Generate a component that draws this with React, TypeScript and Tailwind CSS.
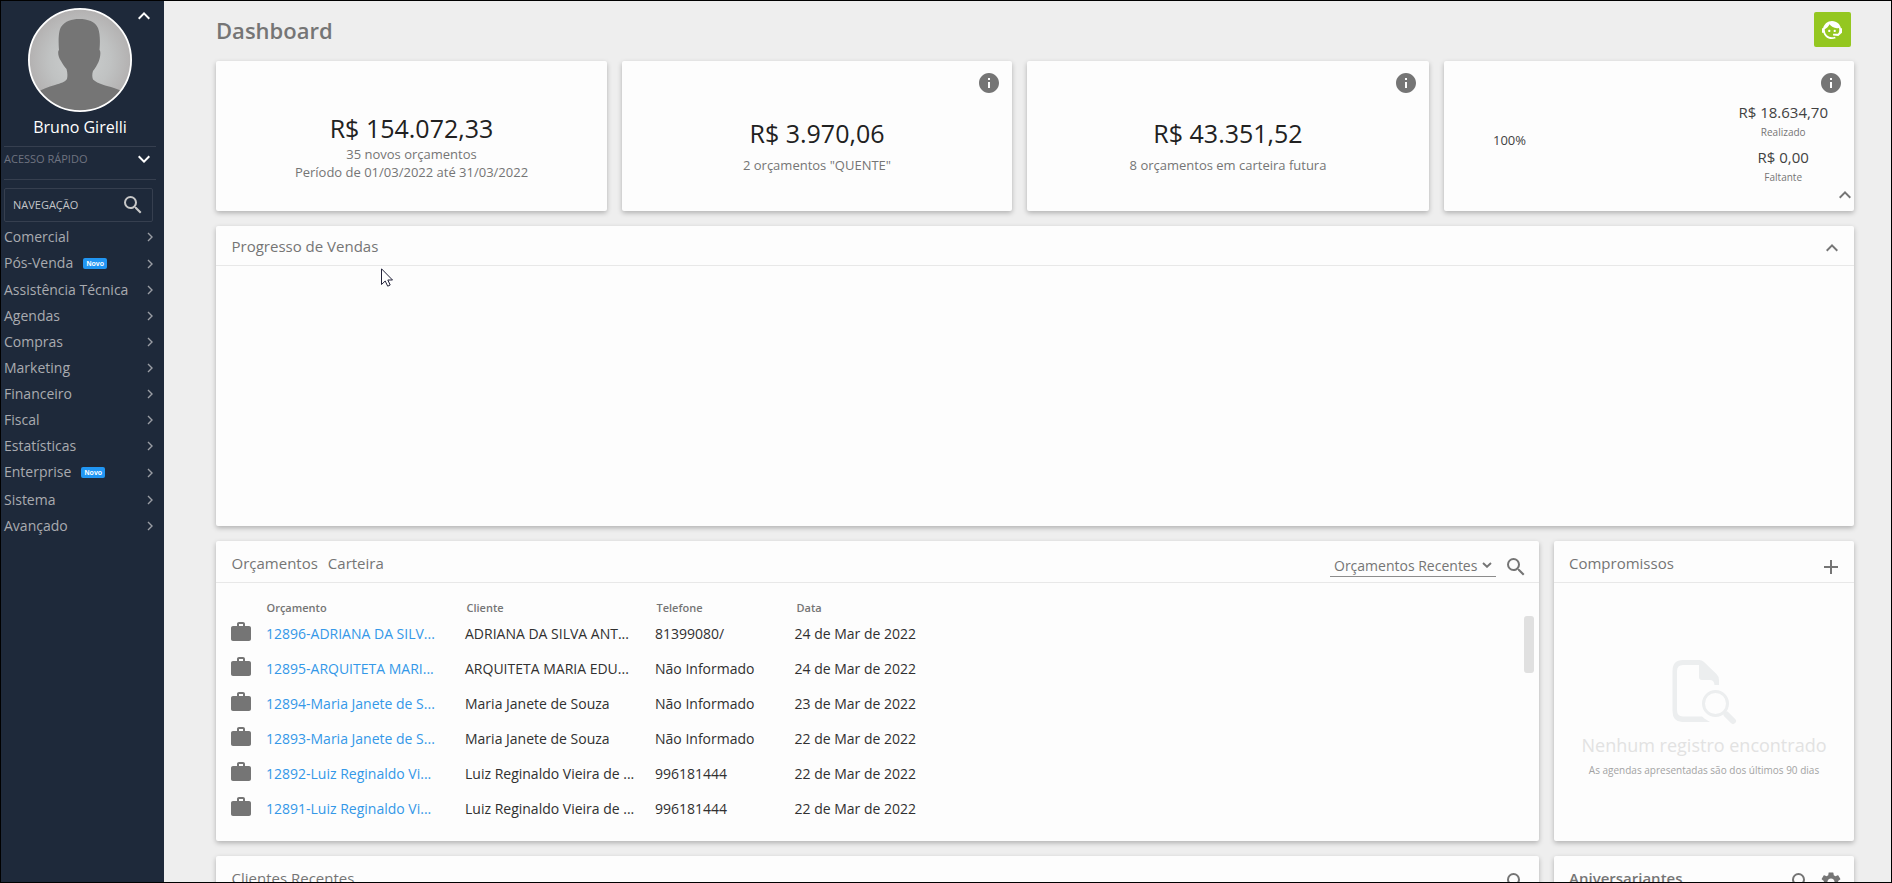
import type { ReactNode } from 'react';
import { MdAdd, MdExpandLess, MdExpandMore, MdInfo, MdSearch, MdSettings, MdWork } from 'react-icons/md';

interface NavItem {
  label: string;
  height: string;
  isNew?: boolean;
}

interface Quote {
  title: string;
  client: string;
  phone: string;
  date: string;
}

const navItems: NavItem[] = [
  { label: 'Comercial', height: 'h-[26px]' },
  { label: 'Pós-Venda', height: 'h-[27px]', isNew: true },
  { label: 'Assistência Técnica', height: 'h-[26px]' },
  { label: 'Agendas', height: 'h-[26px]' },
  { label: 'Compras', height: 'h-[26px]' },
  { label: 'Marketing', height: 'h-[26px]' },
  { label: 'Financeiro', height: 'h-[26px]' },
  { label: 'Fiscal', height: 'h-[26px]' },
  { label: 'Estatísticas', height: 'h-[26px]' },
  { label: 'Enterprise', height: 'h-[28px]', isNew: true },
  { label: 'Sistema', height: 'h-[26px]' },
  { label: 'Avançado', height: 'h-[26px]' },
];

const quotes: Quote[] = [
  { title: '12896-ADRIANA DA SILV...', client: 'ADRIANA DA SILVA ANT...', phone: '81399080/', date: '24 de Mar de 2022' },
  { title: '12895-ARQUITETA MARI...', client: 'ARQUITETA MARIA EDU...', phone: 'Não Informado', date: '24 de Mar de 2022' },
  { title: '12894-Maria Janete de S...', client: 'Maria Janete de Souza', phone: 'Não Informado', date: '23 de Mar de 2022' },
  { title: '12893-Maria Janete de S...', client: 'Maria Janete de Souza', phone: 'Não Informado', date: '22 de Mar de 2022' },
  { title: '12892-Luiz Reginaldo Vi...', client: 'Luiz Reginaldo Vieira de ...', phone: '996181444', date: '22 de Mar de 2022' },
  { title: '12891-Luiz Reginaldo Vi...', client: 'Luiz Reginaldo Vieira de ...', phone: '996181444', date: '22 de Mar de 2022' },
];

function Card({ className, children }: { className: string; children?: ReactNode }) {
  return (
    <div
      className={`relative shrink-0 rounded-[2px] bg-[#fdfdfd] shadow-[0_2px_5px_0_rgba(0,0,0,0.26)] ${className}`}
    >
      {children}
    </div>
  );
}

function CardHeader({ className = 'h-[42px] pl-[15.5px]', children }: { className?: string; children: ReactNode }) {
  return (
    <div className={`flex justify-between border-b border-[#e8e8e8] text-[15px] text-[#757575] ${className}`}>
      {children}
    </div>
  );
}

function Avatar() {
  return (
    <svg viewBox="0 0 104 104" className="h-[104px] w-[104px]">
      <defs>
        <radialGradient id="avatarBg">
          <stop offset="0" stopColor="#cdd0d0" />
          <stop offset="0.6" stopColor="#c0c2c2" />
          <stop offset="1" stopColor="#b3b1b1" />
        </radialGradient>
        <clipPath id="avatarClip">
          <circle cx="52" cy="52" r="51" />
        </clipPath>
      </defs>
      <circle cx="52" cy="52" r="51" fill="url(#avatarBg)" />
      <path
        clipPath="url(#avatarClip)"
        fill="#757575"
        d="M31 42C30.500 36 30 24 33 19C37 13 44 11 51 11C60 11 67 13.500 70 20C72.500 26 72 36 71.500 42C73 43 72.500 49 70.500 54C69 57 67.500 60 65 63C64 66 64 69 65 71.500C70 76 78 77.500 86 80C90 81.300 92 82 94 84L94 104L10 104L10 84C14 81 20 79 27 77C33 75 37 74 39 71C39.700 68 39.500 64 38.500 61C36 58 34.500 56 33 53C30 49 29.500 43 31 42Z"
      />
      <circle cx="52" cy="52" r="51.100" fill="none" stroke="#fff" strokeWidth="1.800" />
    </svg>
  );
}

function AgentIcon() {
  return (
    <svg viewBox="0 0 24 24" className="-ml-[2px] h-6 w-6 shrink-0" fill="#fff">
      <path d="M18.720 14.760C19.070 13.910 19.260 13 19.260 12C19.260 11.280 19.150 10.590 18.960 9.950C18.310 10.100 17.630 10.180 16.920 10.180C13.860 10.180 11.150 8.670 9.500 6.340C8.610 8.500 6.910 10.260 4.770 11.220C4.730 11.470 4.730 11.740 4.730 12A7.270 7.270 0 0 0 12 19.270C13.050 19.270 14.060 19.040 14.970 18.630C15.540 19.720 15.800 20.260 15.780 20.260C14.140 20.810 12.870 21.080 12 21.080C9.580 21.080 7.270 20.130 5.570 18.420C4.530 17.380 3.760 16.110 3.330 14.730H2V10.180H3.090C3.930 6.040 7.600 2.920 12 2.920C14.400 2.920 16.710 3.870 18.420 5.570C19.690 6.840 20.540 8.450 20.890 10.180H22V14.670L22 14.690V14.730H21.940L18.380 18L13.080 17.400V15.730H17.910L18.720 14.760M9.270 11.770C9.570 11.770 9.860 11.890 10.070 12.110C10.280 12.320 10.400 12.610 10.400 12.910C10.400 13.210 10.280 13.500 10.070 13.710C9.860 13.920 9.570 14.040 9.270 14.040C8.640 14.040 8.130 13.540 8.130 12.910C8.130 12.280 8.640 11.770 9.270 11.770M14.720 11.770C15.350 11.770 15.850 12.280 15.850 12.910C15.850 13.540 15.350 14.040 14.720 14.040C14.090 14.040 13.580 13.540 13.580 12.910A1.140 1.140 0 0 1 14.720 11.770Z" />
    </svg>
  );
}

function EmptyIcon() {
  return (
    <svg viewBox="0 0 66 66" className="-ml-[1px] h-[66px] w-[66px]" fill="none">
      <path
        d="M12 0H29V5H12Q6 5 6 11V50Q6 56.500 12 56.500H31Q34 59.500 39 62H11Q1.500 61.500 1.500 51V11Q1.500 0 12 0Z"
        fill="#eceeef"
      />
      <path d="M28 0Q31 0 33 2L45.500 14Q48 16.500 48 20V25H43.500Q43 20 39 20H31Q28 20 28 17Z" fill="#eceeef" />
      <circle cx="44.500" cy="43.500" r="12" stroke="#eceeef" strokeWidth="3" />
      <path d="M55.500 54.500L62 61" stroke="#eceeef" strokeWidth="6" strokeLinecap="round" />
    </svg>
  );
}

function Sidebar() {
  return (
    <aside className="flex w-[163px] shrink-0 flex-col bg-[#1e293a] pl-[3px] text-[#a9abb0]">
      <div className="relative flex h-[146px] w-[152px] flex-col items-center border-b border-[#363f4f] pt-[7px]">
        <Avatar />
        <div className="mt-[4px] text-[16px] leading-[22px] text-white">Bruno Girelli</div>
        <MdExpandLess className="absolute top-[3px] right-0 h-6 w-6 text-white" />
      </div>
      <div className="flex h-[33px] w-[152px] justify-between border-b border-[#363f4f]">
        <span className="pt-[4px] text-[11px] leading-[16px] text-[#6f7380]">ACESSO RÁPIDO</span>
        <MdExpandMore className="h-6 w-6 text-white" />
      </div>
      <div className="mt-[8px] flex h-[34px] w-[149px] items-center justify-between rounded-[2px] border border-[#363f4f] pr-[7px] pl-[8px]">
        <span className="text-[11px] text-[#c4c5c8]">NAVEGAÇÃO</span>
        <MdSearch className="h-6 w-6 text-[#c8c8c8]" />
      </div>
      <nav className="mt-[2px]">
        {navItems.map((item) => (
          <div key={item.label} className={`flex pr-[11px] text-[14px] leading-[26px] ${item.height}`}>
            <span>{item.label}</span>
            {item.isNew && (
              <span className="mt-[8px] ml-[10px] flex h-[11px] w-[24px] items-center justify-center rounded-[2px] bg-[#2196f3] font-['Liberation_Sans'] text-[7px] font-bold text-white">
                Novo
              </span>
            )}
            <svg
              viewBox="0 0 6 10"
              className={`ml-auto h-[10px] w-[6px] ${item.isNew ? 'mt-[9px]' : 'mt-[8px]'}`}
              fill="none"
            >
              <path d="M1 1L5 5L1 9" stroke="#9a9da4" strokeWidth="1.400" />
            </svg>
          </div>
        ))}
      </nav>
    </aside>
  );
}

function SummaryCards() {
  return (
    <div className="flex gap-[15px]">
      <Card className="flex h-[150px] w-[391px] flex-col items-center pt-[50px]">
        <div className="text-[25px] leading-[34px] text-[#212121]">R$ 154.072,33</div>
        <div className="text-[13px] leading-[18px] text-[#757575]">35 novos orçamentos</div>
        <div className="text-[13px] leading-[18px] text-[#757575]">Período de 01/03/2022 até 31/03/2022</div>
      </Card>
      <Card className="flex h-[150px] w-[390px] flex-col items-center pt-[55px]">
        <div className="text-[25px] leading-[34px] text-[#212121]">R$ 3.970,06</div>
        <div className="mt-[6px] text-[13px] leading-[18px] text-[#757575]">2 orçamentos "QUENTE"</div>
        <MdInfo className="absolute top-[10px] right-[11px] h-6 w-6 text-[#757575]" />
      </Card>
      <Card className="flex h-[150px] w-[402px] flex-col items-center pt-[55px]">
        <div className="text-[25px] leading-[34px] text-[#212121]">R$ 43.351,52</div>
        <div className="mt-[6px] text-[13px] leading-[18px] text-[#757575]">8 orçamentos em carteira futura</div>
        <MdInfo className="absolute top-[10px] right-[11px] h-6 w-6 text-[#757575]" />
      </Card>
      <Card className="flex h-[150px] w-[410px] justify-between pr-[26px] pl-[49px]">
        <div className="pt-[70px] text-[13px] leading-[18px] text-[#424242]">100%</div>
        <div className="flex flex-col items-center pt-[41px] text-[15px] leading-[20px] text-[#424242]">
          <div>R$ 18.634,70</div>
          <div className="mt-[3px] text-[10px] leading-[14px] text-[#757575]">Realizado</div>
          <div className="mt-[8px]">R$ 0,00</div>
          <div className="mt-[3px] text-[10px] leading-[14px] text-[#757575]">Faltante</div>
        </div>
        <MdInfo className="absolute top-[10px] right-[11px] h-6 w-6 text-[#757575]" />
        <MdExpandLess className="absolute right-[-3px] bottom-[4px] h-6 w-6 text-[#757575]" />
      </Card>
    </div>
  );
}

function QuotesCard() {
  return (
    <Card className="h-[300px] w-[1323px]">
      <CardHeader>
        <div className="flex gap-[10px] pt-[12px] leading-[21px]">
          <span>Orçamentos</span>
          <span>Carteira</span>
        </div>
        <div className="flex pr-[11px]">
          <div className="mt-[14px] flex h-[22px] w-[166px] items-center border-b border-[#8c8c8c] pl-[4px] text-[14px]">
            <span className="whitespace-nowrap">Orçamentos Recentes</span>
            <svg viewBox="0 0 10 6" className="mt-[-1px] ml-[5px] h-[6px] w-[10px] shrink-0" fill="none">
              <path d="M1 1L5 4.800L9 1" stroke="#757575" strokeWidth="1.900" />
            </svg>
          </div>
          <MdSearch className="mt-[14px] ml-[8px] h-6 w-6" />
        </div>
      </CardHeader>
      <div className="pt-[16px] pl-[15px]">
        <div className="grid h-[17px] grid-cols-[35.5px_200px_190px_140px_1fr] text-[11px] leading-[18px] font-semibold text-[#757575]">
          <span />
          <span>Orçamento</span>
          <span>Cliente</span>
          <span>Telefone</span>
          <span>Data</span>
        </div>
        {quotes.map((q) => (
          <div
            key={q.title}
            className="grid h-[35px] grid-cols-[35px_199px_190px_139.5px_1fr] text-[14px] leading-[35px] text-[#303030]"
          >
            <MdWork className="mt-[4px] -ml-[2px] h-6 w-6 text-[#757575]" />
            <span className="text-[#3498e8]">{q.title}</span>
            <span>{q.client}</span>
            <span>{q.phone}</span>
            <span>{q.date}</span>
          </div>
        ))}
      </div>
      <div className="absolute top-[75px] right-[5px] h-[57px] w-[10px] rounded-[3px] bg-[#e0e0e0]" />
    </Card>
  );
}

function AppointmentsCard() {
  return (
    <Card className="h-[300px] w-[300px]">
      <CardHeader className="h-[42px] pl-[15px]">
        <span className="pt-[12px] leading-[21px]">Compromissos</span>
        <MdAdd className="mt-[14px] mr-[11px] h-6 w-6" />
      </CardHeader>
      <div className="flex flex-col items-center pt-[77px]">
        <EmptyIcon />
        <div className="mt-[6px] text-[18px] leading-[26px] text-[#e2e2e2]">Nenhum registro encontrado</div>
        <div className="mt-[5px] text-[10px] leading-[14px] text-[#a3a3a3]">
          As agendas apresentadas são dos últimos 90 dias
        </div>
      </div>
    </Card>
  );
}

function MouseCursor() {
  return (
    <svg viewBox="0 0 12 19" className="absolute top-[42px] left-[165px] h-[19px] w-[12px]">
      <path
        d="M0.500 0.800V16.500L4.200 13L6.700 18.200L9.200 17L6.800 12H11.500Z"
        fill="#fff"
        stroke="#23233a"
        strokeWidth="1"
      />
    </svg>
  );
}

export default function App() {
  return (
    <div className="flex h-[883px] w-[1892px] overflow-hidden border border-black bg-[#eeeeee] font-['Open_Sans',sans-serif]">
      <Sidebar />
      <main className="flex flex-1 flex-col pr-[37px] pl-[52px]">
        <div className="flex h-[60px] shrink-0 justify-between pr-[3px]">
          <h1 className="pt-[13px] text-[22px] leading-[32px] font-semibold text-[#757575]">Dashboard</h1>
          <button className="mt-[11px] flex h-[35px] w-[37px] items-center justify-center rounded-[2px] bg-[#94c720]">
            <AgentIcon />
          </button>
        </div>
        <div className="flex flex-col gap-[15px]">
          <SummaryCards />
          <Card className="h-[300px]">
            <CardHeader className="h-[40px] pl-[15.5px]">
              <span className="pt-[10px] leading-[21px]">Progresso de Vendas</span>
              <MdExpandLess className="mt-[10px] mr-[10px] h-6 w-6" />
            </CardHeader>
            <MouseCursor />
          </Card>
          <div className="flex gap-[15px]">
            <QuotesCard />
            <AppointmentsCard />
          </div>
          <div className="flex gap-[15px]">
            <Card className="h-[300px] w-[1323px]">
              <CardHeader>
                <span className="pt-[12px] leading-[21px]">Clientes Recentes</span>
                <MdSearch className="mt-[14px] mr-[11px] h-6 w-6" />
              </CardHeader>
            </Card>
            <Card className="h-[300px] w-[300px]">
              <CardHeader className="h-[42px] pl-[15px]">
                <span className="pt-[12px] leading-[21px] font-semibold">Aniversariantes</span>
                <div className="flex pt-[14px] pr-[11px]">
                  <MdSearch className="mr-[6px] h-6 w-6" />
                  <MdSettings className="h-6 w-6" />
                </div>
              </CardHeader>
            </Card>
          </div>
        </div>
      </main>
    </div>
  );
}
